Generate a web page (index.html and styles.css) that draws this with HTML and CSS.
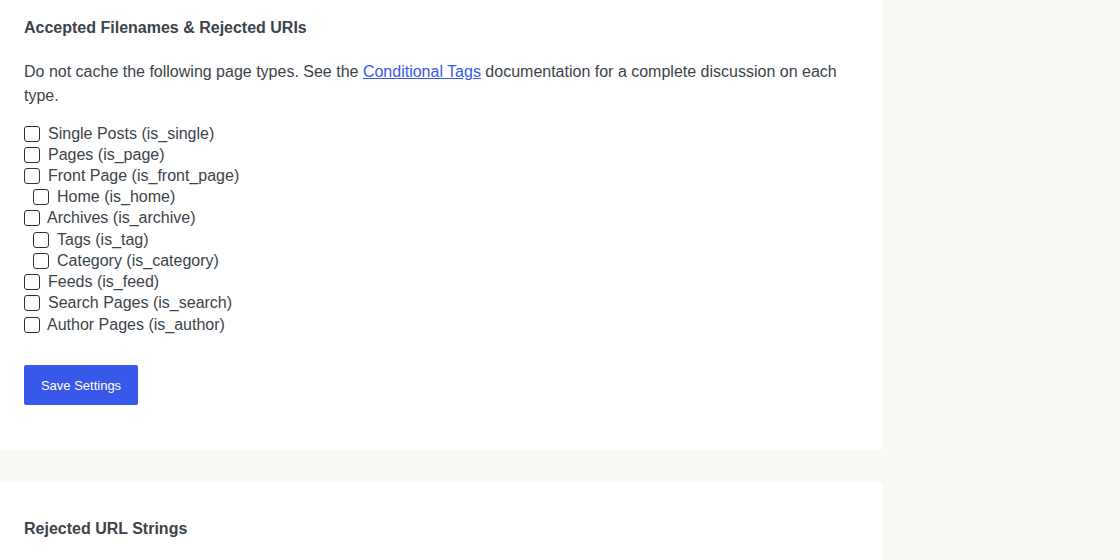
FILE: index.html
```html
<!DOCTYPE html>
<html>
<head>
<meta charset="utf-8">
<link rel="stylesheet" href="styles.css">
</head>
<body>
<div class="layout">
  <main class="main">
    <section class="card card-first">
      <h2 class="card-title">Accepted Filenames &amp; Rejected URIs</h2>
      <p class="desc">Do not cache the following page types. See the <a href="#" class="link">Conditional Tags</a> documentation for a complete discussion on each type.</p>
      <div class="checks">
        <label class="check"><input type="checkbox" class="box"><span>Single Posts (is_single)</span></label>
        <label class="check"><input type="checkbox" class="box"><span>Pages (is_page)</span></label>
        <label class="check"><input type="checkbox" class="box"><span>Front Page (is_front_page)</span></label>
        <label class="check sub"><input type="checkbox" class="box"><span>Home (is_home)</span></label>
        <label class="check tight"><input type="checkbox" class="box"><span>Archives (is_archive)</span></label>
        <label class="check sub"><input type="checkbox" class="box"><span>Tags (is_tag)</span></label>
        <label class="check sub"><input type="checkbox" class="box"><span>Category (is_category)</span></label>
        <label class="check"><input type="checkbox" class="box"><span>Feeds (is_feed)</span></label>
        <label class="check"><input type="checkbox" class="box"><span>Search Pages (is_search)</span></label>
        <label class="check tight"><input type="checkbox" class="box"><span>Author Pages (is_author)</span></label>
      </div>
      <button class="btn">Save Settings</button>
    </section>
    <section class="card card-second">
      <h2 class="card-title">Rejected URL Strings</h2>
    </section>
  </main>
  <aside class="side"></aside>
</div>
</body>
</html>
```

FILE: styles.css
```css
html, body {
  margin: 0;
  padding: 0;
  background: #f8f8f5;
}
body {
  font-family: "Liberation Sans", Arial, sans-serif;
  color: #3c434a;
  width: 1120px;
  height: 560px;
  overflow: hidden;
}
.layout {
  display: flex;
}
.main {
  width: 883px;
  display: flex;
  flex-direction: column;
  gap: 32px;
}
.card {
  background: #fff;
  border-radius: 4px;
  padding: 0 24px;
}
.card-first {
  border-radius: 0 0 4px 4px;
  padding-top: 18px;
  padding-bottom: 45px;
}
.card-second {
  padding-top: 37px;
  height: 200px;
}
.card-title {
  margin: 0;
  font-size: 16px;
  line-height: 20px;
  font-weight: bold;
  color: #3c434a;
}
.desc {
  margin: 22px 0 0;
  font-size: 16px;
  line-height: 24px;
}
.link {
  color: #3858e9;
  text-decoration: underline;
}
.checks {
  margin-top: 15px;
  display: flex;
  flex-direction: column;
}
.check {
  display: flex;
  align-items: center;
  height: 21.22px;
  font-size: 16px;
  line-height: 20px;
}
.box {
  appearance: none;
  -webkit-appearance: none;
  margin: 0 8px 0 0;
  width: 16px;
  height: 16px;
  border: 1px solid #2c3338;
  border-radius: 3px;
  background: #fff;
  flex: none;
}
.check.sub {
  padding-left: 9px;
}
.check.tight .box {
  margin-right: 7px;
}
.btn {
  margin-top: 30px;
  display: block;
  width: 114px;
  height: 40px;
  background: #3858e9;
  color: #fff;
  border: none;
  border-radius: 2px;
  font-family: "Liberation Sans", Arial, sans-serif;
  font-size: 13px;
  padding: 0;
}
.side {
  flex: 1;
}
```
